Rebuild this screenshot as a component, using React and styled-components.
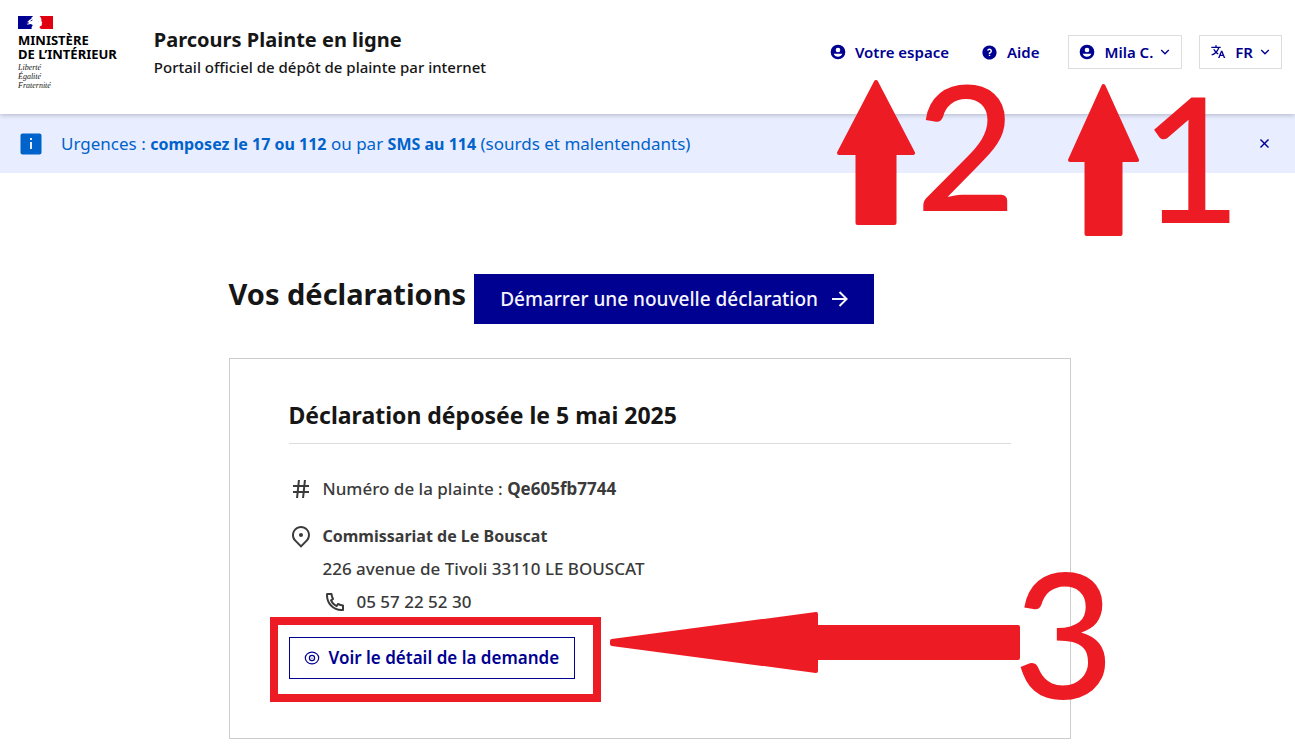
import React, { useState } from 'react';
import styled, { createGlobalStyle, css } from 'styled-components';
import {
  RiArrowDownSLine,
  RiArrowRightLine,
  RiCloseLine,
  RiHashtag,
  RiMapPin2Line,
  RiPhoneLine,
  RiQuestionFill,
  RiTranslate2,
} from 'react-icons/ri';

const GlobalStyle = createGlobalStyle`
  * {
    box-sizing: border-box;
  }

  body {
    margin: 0;
    background: #fff;
    color: #161616;
    font-family: 'Noto Sans', sans-serif;
  }

  h1, h2, p, address {
    margin: 0;
    font-style: normal;
  }

  svg {
    flex-shrink: 0;
  }
`;

const Page = styled.div`
  position: relative;
`;

const Header = styled.header`
  position: relative;
  z-index: 1;
  display: flex;
  align-items: center;
  justify-content: space-between;
  padding: 16px 13px 24px 18px;
  background: #fff;
  box-shadow: 0 1px 5px rgba(0, 0, 18, 0.24);
`;

const Brand = styled.div`
  display: flex;
  align-items: center;
  gap: 37px;
`;

const Logo = styled.div`
  svg {
    display: block;
    margin-bottom: 4px;
  }
`;

const LogoName = styled.p`
  color: #000;
  font-size: 13px;
  font-weight: 700;
  line-height: 14px;
`;

const Motto = styled.p`
  margin-top: 2px;
  color: #161616;
  font-family: 'Liberation Serif', serif;
  font-size: 8px;
  font-style: italic;
  line-height: 9px;
`;

const ServiceTitle = styled.p`
  font-size: 20px;
  font-weight: 700;
  line-height: 28px;
`;

const ServiceTagline = styled.p`
  font-size: 15px;
  font-weight: 500;
  line-height: 26px;
`;

const Tools = styled.div`
  display: flex;
  align-items: center;
  gap: 29px;
  padding-bottom: 2px;
`;

const Nav = styled.nav`
  display: flex;
  gap: 32px;
`;

const MenuGroup = styled.div`
  display: flex;
  gap: 17px;
`;

const toolText = css`
  display: flex;
  align-items: center;
  color: #000091;
  font-family: inherit;
  font-size: 15px;
  font-weight: 600;
  line-height: 24px;
`;

const NavLink = styled.a`
  ${toolText}
  gap: 9px;
  text-decoration: none;
`;

const MenuButton = styled.button`
  ${toolText}
  gap: 9px;
  height: 34px;
  padding: 0 8px 0 10px;
  border: 1px solid #ddd;
  background: #fff;
  cursor: pointer;
`;

const MenuLabel = styled.span`
  display: flex;
  align-items: center;
  gap: 4px;
`;

const Notice = styled.div`
  display: flex;
  align-items: center;
  gap: 19px;
  padding: 16px 22px 16px 20px;
  background: #e8edff;
  color: #0063cb;
`;

const NoticeText = styled.p`
  flex: 1;
  font-size: 17px;
  line-height: 27px;

  strong {
    font-size: 16px;
    font-weight: 700;
    line-height: 16px;
  }
`;

const CloseButton = styled.button`
  display: flex;
  padding: 0;
  border: none;
  background: none;
  color: #000091;
  cursor: pointer;
`;

const Main = styled.main`
  max-width: 846px;
  margin: 0 auto;
  padding: 101px 0 13px 4px;
`;

const TitleRow = styled.div`
  display: flex;
  align-items: flex-start;
  gap: 8px;
`;

const Title = styled.h1`
  font-size: 29px;
  font-weight: 700;
  line-height: 40px;
`;

const PrimaryButton = styled.button`
  display: flex;
  align-items: center;
  gap: 10px;
  padding: 11px 22px 11px 26px;
  border: none;
  background: #000091;
  color: #f5f5fe;
  font-family: inherit;
  font-size: 19px;
  font-weight: 500;
  line-height: 28px;
  cursor: pointer;
`;

const Card = styled.section`
  margin-top: 34px;
  padding: 40px 59px 59px;
  border: 1px solid #ccc;
`;

const CardTitle = styled.h2`
  margin-bottom: 33px;
  padding-bottom: 12px;
  border-bottom: 1px solid #ddd;
  font-size: 23px;
  font-weight: 700;
  line-height: 32px;
`;

const InfoRow = styled.div`
  display: flex;
  align-items: flex-start;
  gap: 10px;
  margin-bottom: 23px;
  color: #3a3a3a;
  font-size: 17px;
  font-weight: 500;
  line-height: 24px;
`;

const OfficeName = styled.strong`
  font-size: 16px;
`;

const Office = styled.address`
  display: flex;
  flex-direction: column;
  gap: 9px;
`;

const Phone = styled.span`
  display: flex;
  gap: 10px;
`;

const DetailButton = styled.button`
  display: flex;
  align-items: center;
  gap: 9px;
  padding: 8px 15px 8px 14px;
  border: 1px solid #000091;
  background: #fff;
  color: #000091;
  font-family: inherit;
  font-size: 17px;
  font-weight: 600;
  line-height: 24px;
  cursor: pointer;
`;

/* Hand-drawn marks laid over the page */
const Marks = styled.div`
  position: absolute;
  z-index: 2;
  top: 0;
  left: 50%;
  width: 0;
  color: #ed1c24;
  pointer-events: none;
`;

const Mark = styled.span`
  position: absolute;
  left: ${({ $x }) => $x}px;
  top: ${({ $y }) => $y}px;

  svg {
    display: block;
  }
`;

const Digit = styled(Mark)`
  font-family: Lato, sans-serif;
  font-size: 174px;
  font-weight: 500;
  line-height: 128px;
`;

const Frame = styled(Mark)`
  width: 331px;
  height: 85px;
  border: 8px solid #ed1c24;
`;

const FlagIcon = () => (
  <svg width="35" height="13" viewBox="0 0 35 13" aria-hidden="true">
    <rect width="35" height="13" fill="#fff" />
    <path fill="#000091" d="M0 0h15.200c-.9.600-1.500 1.200-2 2l.6.200-1.700 1.300-1.900.9 1.100.1-2.200 1.600 1.600-.2-2.400 1.700 1-.1-.8.900h3l.8-.3 1.700.4.700.8-1.200 2.100.2 1.600H0z" />
    <path fill="#e1000f" d="M21.500 0H35v13H23.200c-1.100-.5-1.700-1-1.600-1.900.1-.7 1-1 1.800-1.300.5-.3.300-.8.400-1.200-.1-.3.200-.5.100-.9l-.2-.5c.4-.2.700-.3.500-.8l-.9-1.400c.1-.6.300-1.100.1-1.800-.2-1-.9-2.300-1.900-3.200z" />
    <path fill="none" stroke="#000091" strokeWidth=".8" d="M8 8.600l3-2M9.500 9.600l3.200-.8M12.500 5l2-1M9 11l4-1" />
    <circle cx="20.600" cy="5.800" r=".4" fill="#9a9ab8" />
  </svg>
);

const AccountIcon = () => (
  <svg width="16" height="16" viewBox="0 0 24 24" fill="currentColor" aria-hidden="true">
    <path
      fillRule="evenodd"
      d="M12 1a11 11 0 1 1 0 22 11 11 0 0 1 0-22zm0 4.500a3.500 3.500 0 1 0 0 7 3.500 3.500 0 0 0 0-7zM5.500 14.500c1 2.700 3.500 4.500 6.500 4.500s5.500-1.800 6.500-4.500z"
    />
  </svg>
);

const InfoIcon = () => (
  <svg width="22" height="22" viewBox="0 0 22 22" aria-hidden="true">
    <rect x=".5" y=".5" width="21" height="21" rx="2" fill="currentColor" />
    <path fill="#e8edff" d="M10 5h2v2h-2zM10 9h2v7h-2z" />
  </svg>
);

const EyeIcon = () => (
  <svg width="16" height="16" viewBox="0 0 16 16" fill="none" stroke="currentColor" aria-hidden="true">
    <ellipse cx="8" cy="8" rx="6.700" ry="5.800" strokeWidth="1.200" />
    <circle cx="8" cy="8" r="2.600" strokeWidth="1.200" />
    <circle cx="8" cy="8" r=".6" fill="currentColor" stroke="none" />
  </svg>
);

const UpArrow = ({ width, height, head, shaft }) => {
  const mid = width / 2;
  const inset = (width - shaft) / 2 + 2;
  return (
    <svg width={width} height={height} fill="currentColor" stroke="currentColor" strokeWidth="4" strokeLinejoin="round">
      <path d={`M${mid} 3L${width - 2} ${head - 2}H${width - inset}V${height - 2}H${inset}V${head - 2}H2z`} />
    </svg>
  );
};

const LeftArrow = () => (
  <svg width="411" height="61" fill="currentColor" stroke="currentColor" strokeWidth="4" strokeLinejoin="round">
    <path d="M3 29L207 2V15H409V46H207V59L3 32z" />
  </svg>
);

const App = () => {
  const [noticeOpen, setNoticeOpen] = useState(true);

  return (
    <Page>
      <GlobalStyle />
      <Header>
        <Brand>
          <Logo>
            <FlagIcon />
            <LogoName>
              MINISTÈRE
              <br />
              DE L’INTÉRIEUR
            </LogoName>
            <Motto>
              Liberté
              <br />
              Égalité
              <br />
              Fraternité
            </Motto>
          </Logo>
          <div>
            <ServiceTitle>Parcours Plainte en ligne</ServiceTitle>
            <ServiceTagline>Portail officiel de dépôt de plainte par internet</ServiceTagline>
          </div>
        </Brand>
        <Tools>
          <Nav>
            <NavLink href="#espace">
              <AccountIcon />
              Votre espace
            </NavLink>
            <NavLink href="#aide">
              <RiQuestionFill size={17} />
              Aide
            </NavLink>
          </Nav>
          <MenuGroup>
            <MenuButton type="button">
              <AccountIcon />
              <MenuLabel>
                Mila C.
                <RiArrowDownSLine size={16} />
              </MenuLabel>
            </MenuButton>
            <MenuButton type="button">
              <RiTranslate2 size={16} />
              <MenuLabel>
                FR
                <RiArrowDownSLine size={16} />
              </MenuLabel>
            </MenuButton>
          </MenuGroup>
        </Tools>
      </Header>

      {noticeOpen && (
        <Notice>
          <InfoIcon />
          <NoticeText>
            Urgences : <strong>composez le 17 ou 112</strong> ou par <strong>SMS au 114</strong> (sourds et malentendants)
          </NoticeText>
          <CloseButton type="button" aria-label="Masquer le message" onClick={() => setNoticeOpen(false)}>
            <RiCloseLine size={17} />
          </CloseButton>
        </Notice>
      )}

      <Main>
        <TitleRow>
          <Title>Vos déclarations</Title>
          <PrimaryButton type="button">
            Démarrer une nouvelle déclaration
            <RiArrowRightLine size={24} />
          </PrimaryButton>
        </TitleRow>

        <Card>
          <CardTitle>Déclaration déposée le 5 mai 2025</CardTitle>
          <InfoRow>
            <RiHashtag size={24} />
            <p>
              Numéro de la plainte : <strong>Qe605fb7744</strong>
            </p>
          </InfoRow>
          <InfoRow>
            <RiMapPin2Line size={24} />
            <Office>
              <OfficeName>Commissariat de Le Bouscat</OfficeName>
              <span>226 avenue de Tivoli 33110 LE BOUSCAT</span>
              <Phone>
                <RiPhoneLine size={24} />
                05 57 22 52 30
              </Phone>
            </Office>
          </InfoRow>
          <DetailButton type="button">
            <EyeIcon />
            Voir le détail de la demande
          </DetailButton>
        </Card>
      </Main>

      <Marks>
        <Mark $x={189} $y={79}>
          <UpArrow width={78} height={146} head={76} shaft={41} />
        </Mark>
        <Digit $x={268} $y={80}>2</Digit>
        <Mark $x={420} $y={83}>
          <UpArrow width={71} height={153} head={79} shaft={38} />
        </Mark>
        <Digit $x={493} $y={92}>1</Digit>
        <Frame $x={-378} $y={617} />
        <Mark $x={-39} $y={612}>
          <LeftArrow />
        </Mark>
        <Digit $x={366} $y={568}>3</Digit>
      </Marks>
    </Page>
  );
};

export default App;
